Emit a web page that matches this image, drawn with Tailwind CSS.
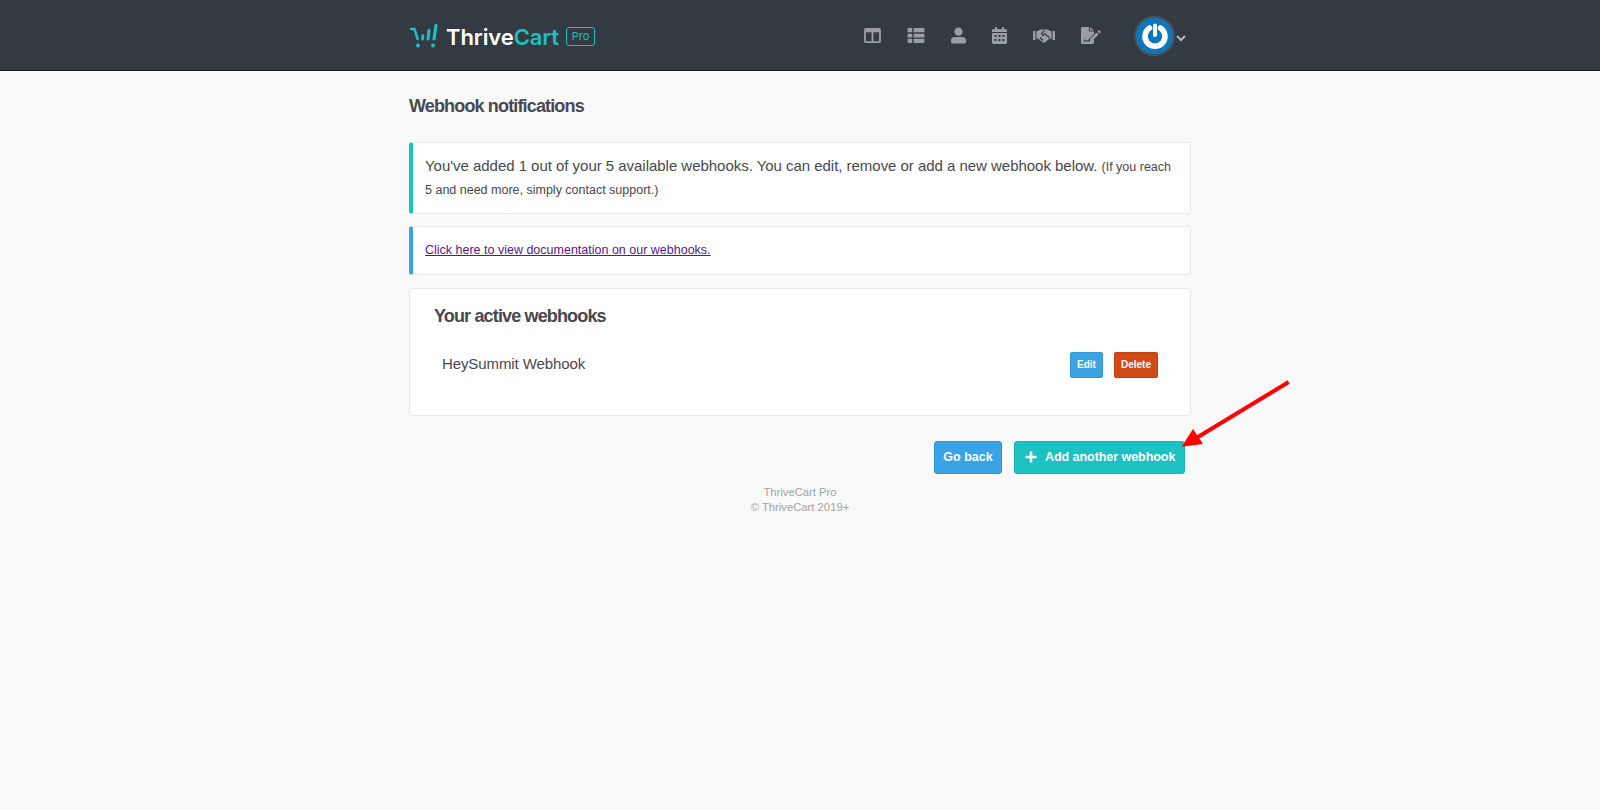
<!DOCTYPE html>
<html lang="en">
<head>
  <meta charset="UTF-8">
  <title>Webhook notifications</title>
  <script src="https://cdn.jsdelivr.net/npm/@tailwindcss/browser@4"></script>
</head>
<body class="bg-[#f9f9f9] font-['Liberation_Sans',Arial,sans-serif] text-[#48484f] h-[810px] overflow-hidden">

  <!-- NAVBAR -->
  <header class="h-[71px] bg-[#343a42] border-b border-[#10182a]">
    <div class="w-[782px] ml-[409px] h-full flex items-center">
      <svg width="29" height="27" viewBox="0 0 29 27" class="mt-[3px]" fill="none" stroke="#1cc1c1" stroke-linecap="round">
        <path d="M2 6H5.500L8.500 16" stroke-width="2.600"/>
        <path d="M14 12.500L13.500 16" stroke-width="2.800"/>
        <path d="M20 7.500L19 16" stroke-width="3"/>
        <path d="M27 2.500L25 16" stroke-width="3.200"/>
        <circle cx="9" cy="22.500" r="2" fill="#1cc1c1" stroke="none"/>
        <circle cx="24" cy="22.500" r="2" fill="#1cc1c1" stroke="none"/>
      </svg>
      <span class="ml-[8px] mt-[3px] font-['Inter',sans-serif] font-semibold text-[22px] tracking-[-0.1px] leading-none text-white">Thrive<span class="text-[#1cc1c1]">Cart</span></span>
      <span class="ml-[7px] mt-[3px] w-[29px] h-[19px] border border-[#1cc1c1] rounded-[3px] flex items-center justify-center font-['Inter',sans-serif] text-[11px] leading-none text-[#1cc1c1]">Pro</span>

      <nav class="text-[#9a9da2]">
        <!-- columns -->
        <svg width="17" height="15" viewBox="0 0 18 16" class="absolute left-[864px] top-[28px]" fill="currentColor"><path fill-rule="evenodd" d="M2 0H16A2 2 0 0 1 18 2V14A2 2 0 0 1 16 16H2A2 2 0 0 1 0 14V2A2 2 0 0 1 2 0ZM2 4.500V14H8V4.500ZM10 4.500V14H16V4.500Z"/></svg>
        <!-- table rows -->
        <svg width="18" height="15" viewBox="0 0 18 16" class="absolute left-[907px] top-[28px]" fill="currentColor"><path d="M1 0H5V4.500H0V1A1 1 0 0 1 1 0ZM6.500 0H17A1 1 0 0 1 18 1V4.500H6.500ZM0 6H5V10H0ZM6.500 6H18V10H6.500ZM0 11.500H5V16H1A1 1 0 0 1 0 15ZM6.500 11.500H18V15A1 1 0 0 1 17 16H6.500Z"/></svg>
        <!-- user -->
        <svg width="15" height="17" viewBox="0 0 16 17" class="absolute left-[951px] top-[27px]" fill="currentColor"><circle cx="8" cy="4.400" r="4.400"/><path d="M4 10H12A4 4 0 0 1 16 14V15.500A1.500 1.500 0 0 1 14.500 17H1.500A1.500 1.500 0 0 1 0 15.500V14A4 4 0 0 1 4 10Z"/></svg>
        <!-- calendar -->
        <svg width="15" height="17" viewBox="0 0 15 17" class="absolute left-[992px] top-[27px]" fill="currentColor"><path fill-rule="evenodd" d="M3 0H5V2H10V0H12V2H13.500A1.500 1.500 0 0 1 15 3.500V5H0V3.500A1.500 1.500 0 0 1 1.500 2H3ZM0 6H15V15.500A1.500 1.500 0 0 1 13.500 17H1.500A1.500 1.500 0 0 1 0 15.500ZM2.500 8V10H4.500V8ZM6.500 8V10H8.500V8ZM10.500 8V10H12.500V8ZM2.500 12V14H4.500V12ZM6.500 12V14H8.500V12ZM10.500 12V14H12.500V12Z"/></svg>
        <!-- handshake -->
        <svg width="22" height="15" viewBox="0 0 22 15" class="absolute left-[1033px] top-[28px]" fill="currentColor">
          <path d="M0 3H2.500V12H0ZM19.500 3H22V12H19.500Z"/>
          <path d="M3.500 3.500L7.500 1.500H14.500L18.500 3.500V10.500L16 11L12 14.500H10L5.500 11L3.500 10.500Z"/>
          <path d="M11.500 2.500L8.500 5.500L10 7.500L12 5.500L16.500 10M7 9.500L10 12.500" fill="none" stroke="#343a42" stroke-width="1.200"/>
        </svg>
        <!-- signature doc -->
        <svg width="20" height="17" viewBox="0 0 20 17" class="absolute left-[1081px] top-[27px]" fill="currentColor"><path d="M1 0H8V4.500H13V7L7.500 12.500V13.500H4L5 11L3 13.500H2.500V14.500H8.500L13 10.500V16A1 1 0 0 1 12 17H1A1 1 0 0 1 0 16V1A1 1 0 0 1 1 0ZM9 0L13 3.500H9ZM15.500 5.500L17.500 7.500L11 14H9V12ZM16.500 4.500L18 3L20 5L18.500 6.500Z"/></svg>
      </nav>

      <div class="absolute left-[1134px] top-[16px] w-[41px] h-[40px] rounded-full bg-[#0e76bc] border-2 border-[#4a5058] flex items-center justify-center">
        <svg width="30" height="30" viewBox="0 0 30 30" fill="none" stroke="#fff" stroke-linecap="round">
          <path d="M9.500 7A10 10 0 1 0 20.500 7" stroke-width="5.500"/>
          <path d="M15 4.500V14" stroke-width="4"/>
        </svg>
      </div>
      <svg width="10" height="7" viewBox="0 0 10 7" class="absolute left-[1176px] top-[35px]" fill="none" stroke="#b5b7ba" stroke-width="2"><path d="M1 1L5 5L9 1"/></svg>
    </div>
  </header>

  <main class="w-[782px] ml-[409px]">
    <h1 class="mt-[25px] text-[18px] leading-[20px] font-bold tracking-[-0.85px]">Webhook notifications</h1>

    <div class="mt-[26px] h-[72px] bg-white border border-[#e9e9e9] border-l-4 border-l-[#1cc1c1] rounded-[3px] pl-3 pr-4 pt-[12px] text-[15px] leading-[21px] tracking-[-0.03px]">
      You've added 1 out of your 5 available webhooks. You can edit, remove or add a new webhook below. <span class="text-[12.5px] tracking-normal">(If you reach 5 and need more, simply contact support.)</span>
    </div>

    <div class="mt-[12px] h-[49px] bg-white border border-[#e9e9e9] border-l-4 border-l-[#3aa3e3] rounded-[3px] pl-3 flex items-center">
      <a href="#" class="text-[12.5px] underline text-[#551a8b]">Click here to view documentation on our webhooks.</a>
    </div>

    <section class="mt-[13px] h-[128px] bg-white border border-[#e9e9e9] rounded-[3px] px-[24px]">
      <h2 class="mt-[17px] text-[18px] leading-[20px] font-bold tracking-[-0.85px]">Your active webhooks</h2>
      <div class="mt-[26px] pl-[8px] pr-[8px] flex items-center justify-between">
        <span class="pb-[2px] text-[15px] tracking-[-0.1px]">HeySummit Webhook</span>
        <div class="flex gap-[11px]">
          <button class="h-[26px] w-[33px] pb-[2px] bg-[#3aa3e3] border border-[#3497d3] rounded-[2px] text-white text-[10px] font-bold">Edit</button>
          <button class="h-[26px] w-[44px] pb-[2px] bg-[#d04a17] border border-[#c44414] rounded-[2px] text-white text-[10px] font-bold">Delete</button>
        </div>
      </div>
    </section>

    <div class="mt-[25px] pr-[6px] flex justify-end gap-[12px]">
      <button class="h-[33px] w-[68px] bg-[#3aa3e3] border border-[#3497d3] rounded-[3px] text-white text-[12.5px] font-bold">Go back</button>
      <button class="h-[33px] w-[171px] bg-[#1cc1c1] border border-[#1ab5b5] rounded-[3px] text-white text-[12.5px] tracking-[-0.05px] font-bold flex items-center pl-[10px] gap-[8px]">
        <svg width="12" height="12" viewBox="0 0 12 12" class="mb-[1px]" fill="#fff"><path d="M4.700 0.500H7.300V4.700H11.500V7.300H7.300V11.500H4.700V7.300H0.500V4.700H4.700Z"/></svg>
        Add another webhook
      </button>
    </div>

    <footer class="mt-[11px] text-center text-[11.25px] leading-[15px] text-[#a3a3a3]">
      <p>ThriveCart Pro</p>
      <p>© ThriveCart 2019+</p>
    </footer>
  </main>

  <!-- red annotation arrow -->
  <svg width="120" height="80" viewBox="0 0 120 80" class="absolute left-[1170px] top-[375px]" fill="#ff0000">
    <path d="M117 8L28 62" stroke="#ff0000" stroke-width="4" stroke-linecap="square"/>
    <path d="M11.700 71.700L23 54L33 69Z"/>
  </svg>
</body>
</html>
